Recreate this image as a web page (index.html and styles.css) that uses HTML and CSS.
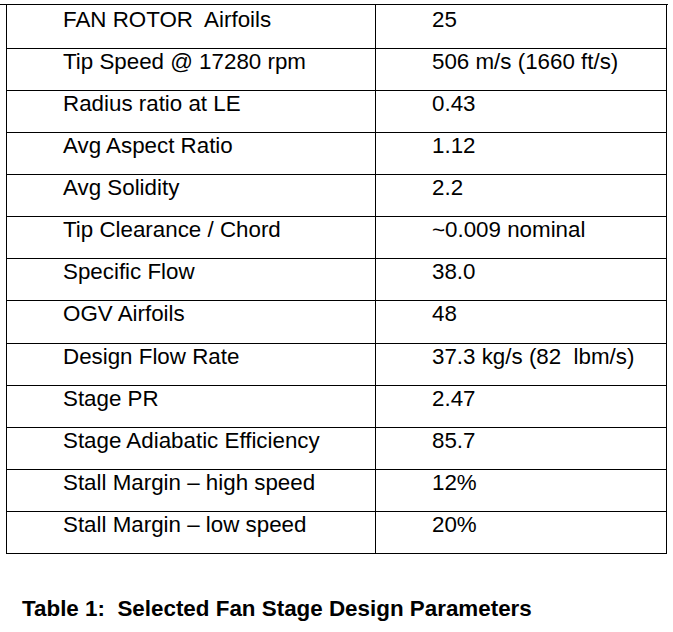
FILE: index.html
```html
<!DOCTYPE html>
<html lang="en">
<head>
<meta charset="utf-8">
<title>Selected Fan Stage Design Parameters</title>
<link rel="stylesheet" href="styles.css">
</head>
<body>
<div class="sheet">
  <div class="tbl" role="table">
    <div class="row first" role="row"><div class="cell name">FAN ROTOR  Airfoils</div><div class="cell val">25</div></div>
    <div class="row" role="row"><div class="cell name">Tip Speed @ 17280 rpm</div><div class="cell val">506 m/s (1660 ft/s)</div></div>
    <div class="row" role="row"><div class="cell name">Radius ratio at LE</div><div class="cell val">0.43</div></div>
    <div class="row" role="row"><div class="cell name">Avg Aspect Ratio</div><div class="cell val">1.12</div></div>
    <div class="row" role="row"><div class="cell name">Avg Solidity</div><div class="cell val">2.2</div></div>
    <div class="row" role="row"><div class="cell name">Tip Clearance / Chord</div><div class="cell val">~0.009 nominal</div></div>
    <div class="row" role="row"><div class="cell name">Specific Flow</div><div class="cell val">38.0</div></div>
    <div class="row" role="row"><div class="cell name">OGV Airfoils</div><div class="cell val">48</div></div>
    <div class="row" role="row"><div class="cell name">Design Flow Rate</div><div class="cell val">37.3 kg/s (82  lbm/s)</div></div>
    <div class="row" role="row"><div class="cell name">Stage PR</div><div class="cell val">2.47</div></div>
    <div class="row" role="row"><div class="cell name">Stage Adiabatic Efficiency</div><div class="cell val">85.7</div></div>
    <div class="row" role="row"><div class="cell name">Stall Margin – high speed</div><div class="cell val">12%</div></div>
    <div class="row" role="row"><div class="cell name">Stall Margin – low speed</div><div class="cell val">20%</div></div>
  </div>
</div>
<p class="caption">Table 1:  Selected Fan Stage Design Parameters</p>
</body>
</html>
```
FILE: styles.css
```css
html, body {
  margin: 0;
  padding: 0;
  background: #fff;
}
body {
  font-family: "Liberation Sans", Arial, sans-serif;
  color: #000;
  width: 673px;
  height: 632px;
  overflow: hidden;
}
.sheet {
  margin-top: 4px;
  width: 668px;
  border-top: 1px solid #000;
}
.tbl {
  margin-left: 6px;
  width: 661px;
}
.row {
  display: grid;
  grid-template-columns: 369px 292px;
  height: 42.08px;
  box-sizing: border-box;
  border-bottom: 1px solid #000;
}
.row.first {
  height: 44px;
}
.cell {
  box-sizing: border-box;
  border-left: 1px solid #000;
  padding-left: 56px;
  font-size: 22.35px;
  line-height: 25px;
  white-space: pre;
}
.row.first .cell {
  padding-top: 2px;
}
.val {
  border-right: 1px solid #000;
}
.caption {
  margin: 42px 0 0 22px;
  font-size: 22.4px;
  line-height: 25px;
  font-weight: bold;
  white-space: pre;
}
```
